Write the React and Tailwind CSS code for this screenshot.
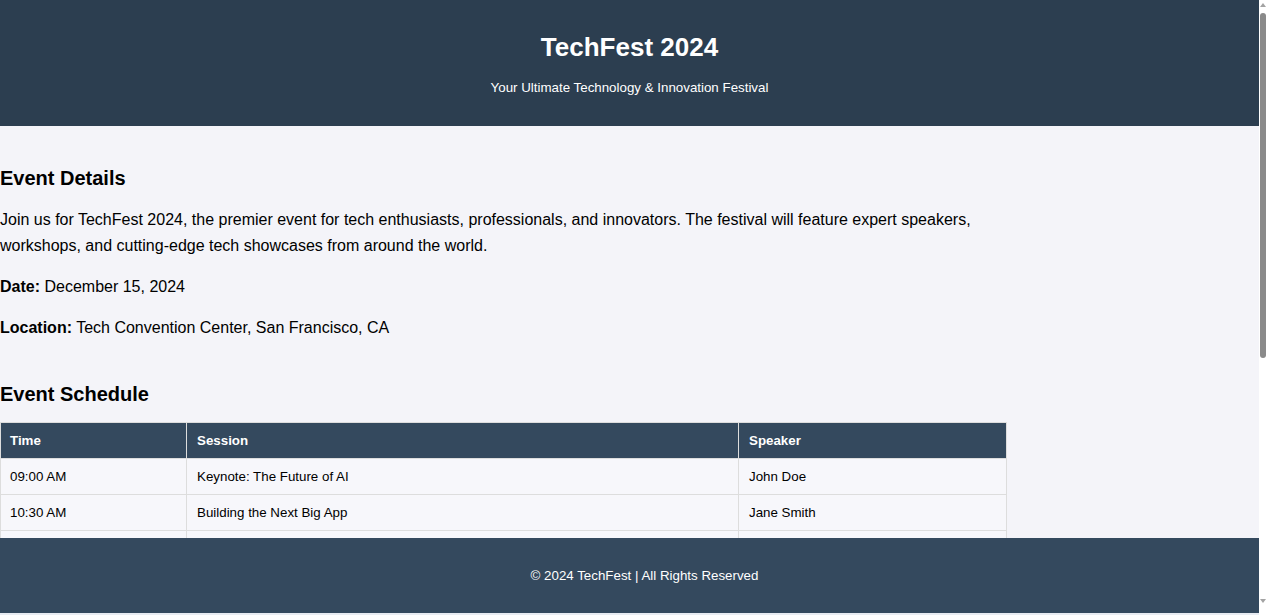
import React from 'react';

const schedule = [
  { time: '09:00 AM', session: 'Keynote: The Future of AI', speaker: 'John Doe' },
  { time: '10:30 AM', session: 'Building the Next Big App', speaker: 'Jane Smith' },
  { time: '12:00 PM', session: 'Lunch & Networking', speaker: '-' },
  { time: '01:30 PM', session: 'Workshop: Cloud Native Apps', speaker: 'Alex Lee' }
];

const App = () => {
  return (
    <div className="flex h-[615px] w-[1267px] overflow-hidden bg-[#f4f4f9] font-['Liberation_Sans',Arial,sans-serif] text-black">
      <div className="flex w-[1259px] flex-col">
        <header className="flex h-[126px] shrink-0 flex-col items-center bg-[#2c3e50] pt-[32px] text-white">
          <h1 className="text-[26px] leading-[30px] font-bold">TechFest 2024</h1>
          <p className="mt-[18px] text-[13.33px] leading-[16px]">Your Ultimate Technology &amp; Innovation Festival</p>
        </header>

        <main className="min-h-0 flex-1 overflow-hidden">
          <div className="w-[1007px]">
            <section className="pt-[40px]">
              <h2 className="text-[20px] leading-[24px] font-bold">Event Details</h2>
              <p className="mt-[17px] text-[16px] leading-[26px]">
                Join us for TechFest 2024, the premier event for tech enthusiasts, professionals, and innovators. The festival will feature expert speakers, workshops, and cutting-edge tech showcases from around the world.
              </p>
              <p className="mt-[15px] text-[16px] leading-[26px]">
                <strong>Date:</strong> December 15, 2024
              </p>
              <p className="mt-[15px] text-[16px] leading-[26px]">
                <strong>Location:</strong> Tech Convention Center, San Francisco, CA
              </p>
            </section>

            <section className="pt-[41px]">
              <h2 className="text-[20px] leading-[24px] font-bold">Event Schedule</h2>
              <table className="mt-[16px] w-[1007px] border-collapse text-[13.33px]">
                <thead>
                  <tr className="bg-[#34495e] text-white">
                    <th className="h-[36px] w-[186px] border border-[#ddd] pr-[10px] pl-[9px] text-left font-bold">Time</th>
                    <th className="h-[36px] w-[552px] border border-[#ddd] px-[10px] text-left font-bold">Session</th>
                    <th className="h-[36px] border border-[#ddd] px-[10px] text-left font-bold">Speaker</th>
                  </tr>
                </thead>
                <tbody>
                  {schedule.map((row) => (
                    <tr key={row.time} className="bg-[#f7f7fb]">
                      <td className="h-[36px] border border-[#ddd] pr-[10px] pl-[9px]">{row.time}</td>
                      <td className="h-[36px] border border-[#ddd] px-[10px]">{row.session}</td>
                      <td className="h-[36px] border border-[#ddd] px-[10px]">{row.speaker}</td>
                    </tr>
                  ))}
                </tbody>
              </table>
            </section>
          </div>
        </main>

        <footer className="flex h-[75px] shrink-0 items-center justify-center bg-[#34495e] pl-[30px] text-[13.33px] text-white">
          © 2024 TechFest | All Rights Reserved
        </footer>
        <div className="h-[2px] shrink-0 bg-[#e8ecf2]" />
      </div>

      <div className="flex w-[8px] flex-col items-center bg-white">
        <div className="mt-[3px] h-0 w-0 border-x-[3px] border-b-[4px] border-x-transparent border-b-[#a3a3a3]" />
        <div className="mt-[6px] h-[345px] w-[6px] rounded-[3px] bg-[#8a8a8a]" />
        <div className="flex-1" />
        <div className="mb-[12px] h-0 w-0 border-x-[3px] border-t-[4px] border-x-transparent border-t-[#a3a3a3]" />
      </div>
    </div>
  );
};

export default App;
